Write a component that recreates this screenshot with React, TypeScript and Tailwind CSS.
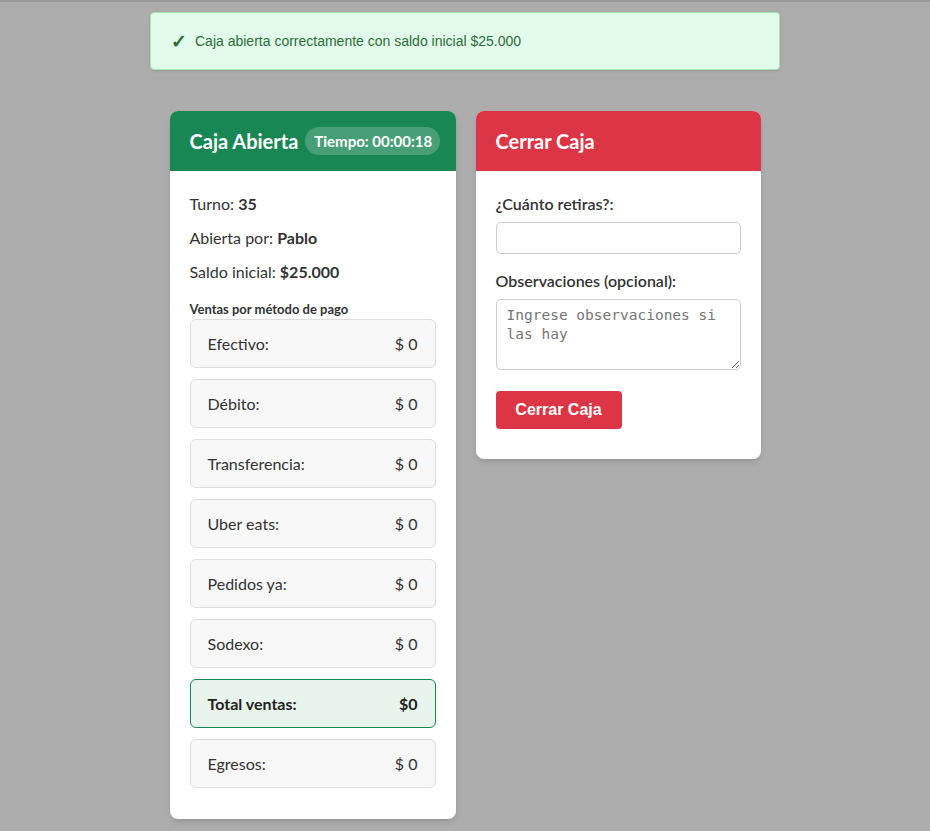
import React from "react";

const metodos = [
  { label: "Efectivo:", valor: "$ 0" },
  { label: "Débito:", valor: "$ 0" },
  { label: "Transferencia:", valor: "$ 0" },
  { label: "Uber eats:", valor: "$ 0" },
  { label: "Pedidos ya:", valor: "$ 0" },
  { label: "Sodexo:", valor: "$ 0" },
];

function Fila({ label, valor }: { label: string; valor: string }) {
  return (
    <div className="flex h-[49px] items-center justify-between rounded-md border border-[#dedede] bg-[#f8f8f8] px-[17px] text-[16px] text-[#333]">
      <span>{label}</span>
      <span>{valor}</span>
    </div>
  );
}

export default function App() {
  return (
    <div className="min-h-[831px] bg-[#adadad] font-['Lato',sans-serif] text-[#333]">
      <div className="h-[2px] bg-[#9a9a9a]" />
      {/* alerta */}
      <div className="mx-auto mt-[10px] flex h-[58px] w-[630px] items-center rounded-[4px] border border-[#a8e6b8] bg-[#e3fbea] px-[20px] font-['Liberation_Sans',Arial,sans-serif] text-[14px] text-[#2b6e3a] shadow-sm">
        <span className="mr-[8px] text-[19px] font-bold leading-none">✓</span>
        <span>Caja abierta correctamente con saldo inicial $25.000</span>
      </div>

      <div className="mx-auto mt-[41px] flex w-[591px] items-start gap-[20px]">
        {/* caja abierta */}
        <div className="w-[286px] overflow-hidden rounded-lg bg-white shadow-md">
          <div className="flex h-[60px] items-center gap-[7px] whitespace-nowrap bg-[#198754] px-[20px] text-white">
            <h2 className="shrink-0 text-[20px] font-bold">Caja Abierta</h2>
            <span className="shrink-0 rounded-full bg-white/20 pl-[9px] pr-[8px] py-[3px] text-[15px] font-bold">
              Tiempo: 00:00:18
            </span>
          </div>
          <div className="px-[20px] pb-[31px] pt-[23px]">
            <p className="text-[16px] leading-[20px]">
              Turno: <b>35</b>
            </p>
            <p className="mt-[14px] text-[16px] leading-[20px]">
              Abierta por: <b>Pablo</b>
            </p>
            <p className="mt-[14px] text-[16px] leading-[20px]">
              Saldo inicial: <b>$25.000</b>
            </p>
            <h3 className="mt-[19px] text-[13px] font-bold leading-[16px]">Ventas por método de pago</h3>
            <div className="mt-[2px] flex flex-col gap-[11px]">
              {metodos.map((m) => (
                <Fila key={m.label} label={m.label} valor={m.valor} />
              ))}
              <div className="flex h-[49px] items-center justify-between rounded-md border border-[#198754] bg-[#e8f5ec] px-[17px] text-[16px] font-bold text-[#222]">
                <span>Total ventas:</span>
                <span>$0</span>
              </div>
              <Fila label="Egresos:" valor="$ 0" />
            </div>
          </div>
        </div>

        {/* cerrar caja */}
        <div className="w-[285px] overflow-hidden rounded-lg bg-white shadow-md">
          <div className="flex h-[60px] items-center bg-[#dc3545] px-[20px] text-white">
            <h2 className="text-[20px] font-bold">Cerrar Caja</h2>
          </div>
          <div className="px-[20px] pb-[30px] pt-[23px]">
            <label className="block text-[16px] font-semibold leading-[20px]">¿Cuánto retiras?:</label>
            <input
              type="text"
              className="mt-[8px] block h-[32px] w-full rounded-[5px] border border-[#cccccc] px-[8px] outline-none"
            />
            <label className="mt-[17px] block text-[16px] font-semibold leading-[20px]">
              Observaciones (opcional):
            </label>
            <textarea
              placeholder="Ingrese observaciones si las hay"
              className="mt-[8px] block h-[71px] w-full rounded-[5px] border border-[#cccccc] px-[10px] py-[6px] font-['DejaVu_Sans_Mono',monospace] text-[14.5px] leading-[19px] placeholder:text-[#757575] outline-none"
            />
            <button className="mt-[21px] h-[38px] w-[126px] rounded-[4px] bg-[#dc3545] font-['Liberation_Sans',Arial,sans-serif] text-[16px] font-bold text-white">
              Cerrar Caja
            </button>
          </div>
        </div>
      </div>
    </div>
  );
}
